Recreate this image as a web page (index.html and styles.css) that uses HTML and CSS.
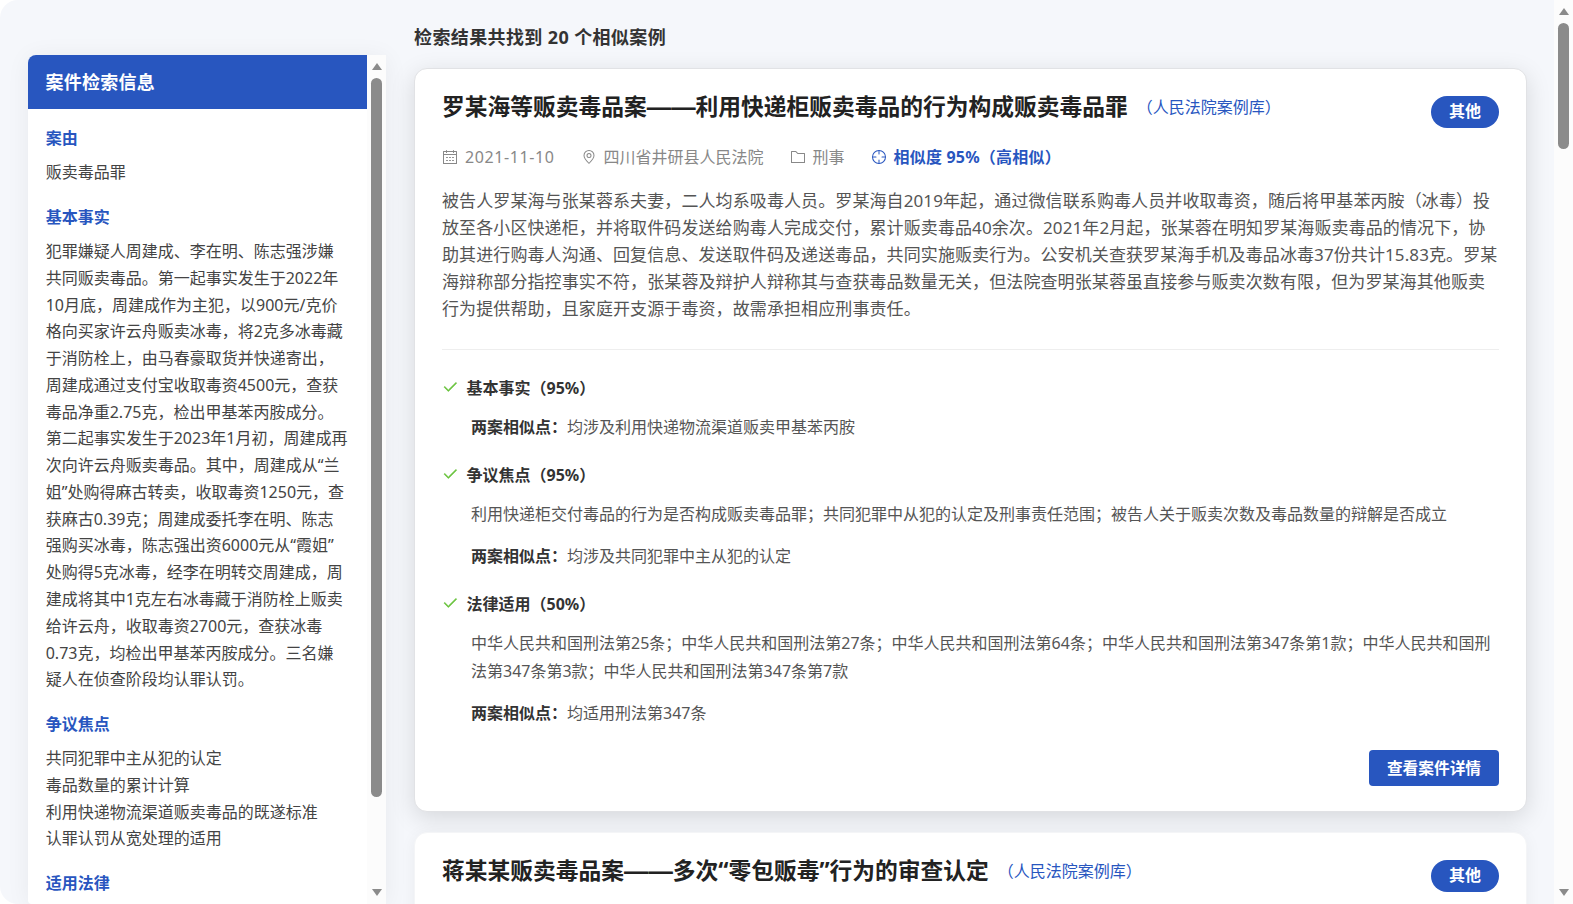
FILE: index.html
```html
<!DOCTYPE html>
<html lang="zh-CN">
<head>
    <meta charset="UTF-8">
    <meta name="viewport" content="width=device-width, initial-scale=1.0">
    <title>类案检索结果</title>
    <link rel="stylesheet" href="styles.css">
</head>
<body>

<!-- 图标 -->
<svg class="icon-defs" viewBox="0 0 1024 1024">
    <symbol id="icon-calendar" viewBox="0 0 1024 1024">
        <path d="M128 384v512h768V192H768v32a32 32 0 1 1-64 0v-32H320v32a32 32 0 0 1-64 0v-32H128v128h768v64zm192-256h384V96a32 32 0 1 1 64 0v32h160a32 32 0 0 1 32 32v768a32 32 0 0 1-32 32H96a32 32 0 0 1-32-32V160a32 32 0 0 1 32-32h160V96a32 32 0 0 1 64 0zm-32 384h64a32 32 0 0 1 0 64h-64a32 32 0 0 1 0-64m0 192h64a32 32 0 1 1 0 64h-64a32 32 0 1 1 0-64m192-192h64a32 32 0 0 1 0 64h-64a32 32 0 0 1 0-64m0 192h64a32 32 0 1 1 0 64h-64a32 32 0 1 1 0-64m192-192h64a32 32 0 1 1 0 64h-64a32 32 0 1 1 0-64m0 192h64a32 32 0 1 1 0 64h-64a32 32 0 1 1 0-64"/>
    </symbol>
    <symbol id="icon-location" viewBox="0 0 1024 1024">
        <path d="M800 416a288 288 0 1 0-576 0c0 118.144 94.528 272.128 288 456.576C705.472 688.128 800 534.144 800 416M512 960C277.312 746.688 160 565.312 160 416a352 352 0 0 1 704 0c0 149.312-117.312 330.688-352 544"/>
        <path d="M512 512a96 96 0 1 0 0-192 96 96 0 0 0 0 192m0 64a160 160 0 1 1 0-320 160 160 0 0 1 0 320"/>
    </symbol>
    <symbol id="icon-folder" viewBox="0 0 1024 1024">
        <path d="M128 192v640h768V320H485.76L357.504 192zm-32-64h287.872l128.384 128H928a32 32 0 0 1 32 32v576a32 32 0 0 1-32 32H96a32 32 0 0 1-32-32V160a32 32 0 0 1 32-32"/>
    </symbol>
    <symbol id="icon-aim" viewBox="0 0 1024 1024">
        <path d="M512 896a384 384 0 1 0 0-768 384 384 0 0 0 0 768m0 64a448 448 0 1 1 0-896 448 448 0 0 1 0 896"/>
        <path d="M512 96a32 32 0 0 1 32 32v192a32 32 0 0 1-64 0V128a32 32 0 0 1 32-32m0 576a32 32 0 0 1 32 32v192a32 32 0 1 1-64 0V704a32 32 0 0 1 32-32M96 512a32 32 0 0 1 32-32h192a32 32 0 0 1 0 64H128a32 32 0 0 1-32-32m576 0a32 32 0 0 1 32-32h192a32 32 0 1 1 0 64H704a32 32 0 0 1-32-32"/>
    </symbol>
    <symbol id="icon-check" viewBox="0 0 1024 1024">
        <path d="M406.656 706.944 195.84 496.256a32 32 0 1 0-45.248 45.248l256 256 512-512a32 32 0 0 0-45.248-45.248L406.592 706.944z"/>
    </symbol>
</svg>

<div class="page">
    <div class="content">
        <!-- 左侧检索信息 -->
        <aside class="sidebar">
            <div class="sidebar-main">
                <div class="sidebar-header">案件检索信息</div>
                <div class="sidebar-body">
                    <h3>案由</h3>
                    <p>贩卖毒品罪</p>
                    <h3>基本事实</h3>
                    <p>犯罪嫌疑人周建成、李在明、陈志强涉嫌<br>共同贩卖毒品。第一起事实发生于2022年<br>10月底，周建成作为主犯，以900元/克价<br>格向买家许云舟贩卖冰毒，将2克多冰毒藏<br>于消防栓上，由马春豪取货并快递寄出，<br>周建成通过支付宝收取毒资4500元，查获<br>毒品净重2.75克，检出甲基苯丙胺成分。<br>第二起事实发生于2023年1月初，周建成再<br>次向许云舟贩卖毒品。其中，周建成从“兰<br>姐”处购得麻古转卖，收取毒资1250元，查<br>获麻古0.39克；周建成委托李在明、陈志<br>强购买冰毒，陈志强出资6000元从“霞姐”<br>处购得5克冰毒，经李在明转交周建成，周<br>建成将其中1克左右冰毒藏于消防栓上贩卖<br>给许云舟，收取毒资2700元，查获冰毒<br>0.73克，均检出甲基苯丙胺成分。三名嫌<br>疑人在侦查阶段均认罪认罚。</p>
                    <h3>争议焦点</h3>
                    <p>共同犯罪中主从犯的认定<br>毒品数量的累计计算<br>利用快递物流渠道贩卖毒品的既遂标准<br>认罪认罚从宽处理的适用</p>
                    <h3>适用法律</h3>
                </div>
            </div>
            <div class="scrollbar">
                <span class="arrow arrow-up"></span>
                <span class="thumb sidebar-thumb"></span>
                <span class="arrow arrow-down"></span>
            </div>
        </aside>

        <!-- 右侧案例列表 -->
        <main class="results">
            <div class="results-title">检索结果共找到 20 个相似案例</div>

            <div class="case-card active">
                <div class="case-header">
                    <h2>罗某海等贩卖毒品案<span class="dash">——</span>利用快递柜贩卖毒品的行为构成贩卖毒品罪</h2>
                    <span class="source">（人民法院案例库）</span>
                    <span class="badge">其他</span>
                </div>
                <div class="case-meta">
                    <span class="meta-item date"><svg class="icon"><use href="#icon-calendar"/></svg>2021-11-10</span>
                    <span class="meta-item"><svg class="icon"><use href="#icon-location"/></svg>四川省井研县人民法院</span>
                    <span class="meta-item"><svg class="icon"><use href="#icon-folder"/></svg>刑事</span>
                    <span class="meta-item similarity"><svg class="icon"><use href="#icon-aim"/></svg>相似度 95%（高相似）</span>
                </div>
                <p class="case-summary">被告人罗某海与张某蓉系夫妻，二人均系吸毒人员。罗某海自2019年起，通过微信联系购毒人员并收取毒资，随后将甲基苯丙胺（冰毒）投<br>放至各小区快递柜，并将取件码发送给购毒人完成交付，累计贩卖毒品40余次。2021年2月起，张某蓉在明知罗某海贩卖毒品的情况下，协<br>助其进行购毒人沟通、回复信息、发送取件码及递送毒品，共同实施贩卖行为。公安机关查获罗某海手机及毒品冰毒37份共计15.83克。罗某<br>海辩称部分指控事实不符，张某蓉及辩护人辩称其与查获毒品数量无关，但法院查明张某蓉虽直接参与贩卖次数有限，但为罗某海其他贩卖<br>行为提供帮助，且家庭开支源于毒资，故需承担相应刑事责任。</p>

                <div class="analysis">
                    <div class="analysis-item">
                        <h4><svg class="icon"><use href="#icon-check"/></svg>基本事实（95%）</h4>
                        <p><b>两案相似点：</b>均涉及利用快递物流渠道贩卖甲基苯丙胺</p>
                    </div>
                    <div class="analysis-item">
                        <h4><svg class="icon"><use href="#icon-check"/></svg>争议焦点（95%）</h4>
                        <p>利用快递柜交付毒品的行为是否构成贩卖毒品罪；共同犯罪中从犯的认定及刑事责任范围；被告人关于贩卖次数及毒品数量的辩解是否成立</p>
                        <p><b>两案相似点：</b>均涉及共同犯罪中主从犯的认定</p>
                    </div>
                    <div class="analysis-item">
                        <h4><svg class="icon"><use href="#icon-check"/></svg>法律适用（50%）</h4>
                        <p>中华人民共和国刑法第25条；中华人民共和国刑法第27条；中华人民共和国刑法第64条；中华人民共和国刑法第347条第1款；中华人民共和国刑<br>法第347条第3款；中华人民共和国刑法第347条第7款</p>
                        <p><b>两案相似点：</b>均适用刑法第347条</p>
                    </div>
                </div>

                <div class="case-footer">
                    <button type="button">查看案件详情</button>
                </div>
            </div>

            <div class="case-card">
                <div class="case-header">
                    <h2>蒋某某贩卖毒品案<span class="dash">——</span>多次“零包贩毒”行为的审查认定</h2>
                    <span class="source">（人民法院案例库）</span>
                    <span class="badge">其他</span>
                </div>
            </div>
        </main>
    </div>

    <div class="scrollbar page-scrollbar">
        <span class="arrow arrow-up"></span>
        <span class="thumb page-thumb"></span>
        <span class="arrow arrow-down"></span>
    </div>
</div>

</body>
</html>
```
FILE: styles.css
```css
* { box-sizing: border-box; }
body { margin: 0; height: 904px; overflow: hidden; background: #fff; color: #444; font-family: "Noto Sans", "Noto Sans CJK SC", sans-serif; font-size: 16px; }
h2, h3, h4, p { margin: 0; }
.icon-defs { display: none; }
.icon { width: 16px; height: 16px; flex: none; fill: currentColor; }

.page { display: flex; height: 904px; overflow: hidden; background: #f5f7fb; border-radius: 18px 0 0 18px; }
.content { flex: 1; display: flex; gap: 28px; padding: 0 27px 0 28px; }

/* 滚动条 */
.scrollbar { display: flex; flex-direction: column; align-items: center; width: 19px; flex: none; background: #fcfcfc; }
.arrow { width: 0; height: 0; border-left: 5px solid transparent; border-right: 5px solid transparent; }
.arrow-up { margin-top: 8px; border-bottom: 7px solid #8b8b8b; }
.arrow-down { margin-top: auto; margin-bottom: 8px; border-top: 7px solid #8b8b8b; }
.thumb { width: 11px; margin-top: 8px; border-radius: 6px; background: #8b8b8b; }
.sidebar-thumb { height: 719px; }
.page-thumb { height: 126px; }

/* 左侧 */
.sidebar { display: flex; width: 358px; height: 849px; margin-top: 55px; flex: none; overflow: hidden; background: #fff; border-radius: 8px 0 0 4px; box-shadow: 0 2px 24px rgba(0, 0, 0, 0.06); }
.sidebar-main { flex: 1; white-space: nowrap; }
.sidebar-header { height: 54px; padding: 0 17.5px; line-height: 54px; background: #2856bf; color: #fff; font-size: 18px; font-weight: bold; letter-spacing: 0.25px; }
.sidebar-body { padding: 16px 17.7px; }
.sidebar-body h3 { margin-bottom: 7.2px; line-height: 27px; font-size: 16px; font-weight: bold; color: #2856bf; }
.sidebar-body p { margin-bottom: 17.9px; line-height: 26.77px; }

/* 右侧 */
.results { flex: 1; min-width: 0; white-space: nowrap; }
.results-title { margin: 25px 0 18px; line-height: 25px; font-size: 18px; font-weight: bold; color: #333; letter-spacing: 0.38px; }
.case-card { padding: 27px; margin-bottom: 20px; background: #fff; border: 1px solid #f4f5f7; border-radius: 13px; box-shadow: 0 2px 16px rgba(0, 0, 0, 0.05); }
.case-card.active { height: 744px; border-color: #e1e2e5; box-shadow: 0 6px 24px rgba(0, 0, 0, 0.13); }
.case-header { display: flex; align-items: flex-start; height: 45px; }
.case-header h2 { height: 24px; margin-top: -1px; line-height: 20px; font-size: 22.75px; font-weight: bold; color: #222; }
.dash { font-family: "Liberation Sans", sans-serif; font-size: 24.4px; line-height: 1; }
.source { margin-left: 9px; line-height: 23px; color: #2856bf; }
.badge { width: 68px; height: 32px; margin-left: auto; border-radius: 16px; background: #2856bf; color: #fff; line-height: 31px; text-align: center; font-weight: bold; }
.case-meta { display: flex; align-items: center; height: 31px; gap: 26px; color: #888; }
.meta-item { display: flex; align-items: center; gap: 7px; line-height: 22px; }
.date { letter-spacing: 0.6px; }
.similarity { color: #2856bf; font-weight: bold; letter-spacing: 0.2px; }
.case-summary { height: 178px; padding-top: 15px; border-bottom: 1px solid #eee; line-height: 27px; font-size: 17px; letter-spacing: 0.1px; color: #555; }
.analysis { padding-top: 23px; }
.analysis-item { margin-bottom: 19px; }
.analysis-item h4 { display: flex; align-items: center; gap: 8.5px; height: 28px; font-size: 16px; color: #333; }
.analysis-item h4 .icon { fill: #67c23a; stroke: #67c23a; stroke-width: 45px; }
.analysis-item p { margin-top: 14px; padding-left: 29px; line-height: 28px; color: #555; }
.analysis-item h4 + p { margin-top: 12px; }
.analysis-item b { color: #333; }
.case-footer { display: flex; justify-content: flex-end; margin-top: 23px; }
.case-footer button { width: 130px; height: 36px; padding: 0 0 2px; border: 0; border-radius: 4px; background: #2856bf; color: #fff; font-family: inherit; font-size: 15.7px; font-weight: bold; }
```
